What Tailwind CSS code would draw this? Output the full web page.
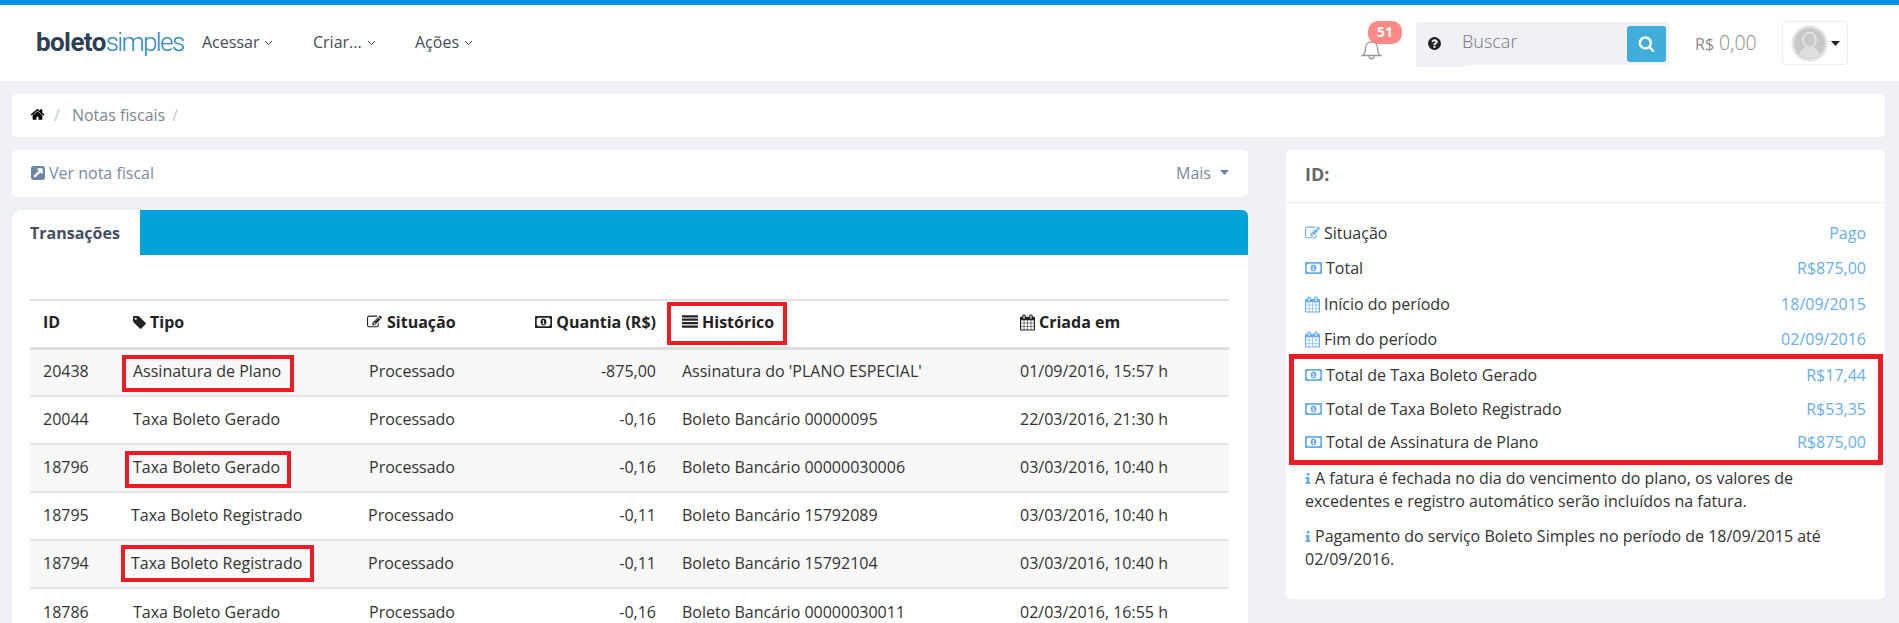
<!doctype html>
<html lang="pt-BR" class="h-[623px] overflow-hidden">
<head>
<meta charset="utf-8">
<script src="https://cdn.jsdelivr.net/npm/@tailwindcss/browser@4"></script>
<title>Notas fiscais</title>
</head>
<body class="relative h-[623px] w-[1899px] overflow-hidden bg-[#f0f1f6] font-['Open_Sans',sans-serif] text-[16px] text-[#333]">
<svg class="hidden">
  <symbol id="i-home" viewBox="0 0 1792 1792"><path d="M1472 992v480q0 26-19 45t-45 19h-384v-384h-256v384h-384q-26 0-45-19t-19-45v-480q0-1 .5-3t.5-3l575-474 575 474q1 2 1 6zm223-69l-62 74q-8 9-21 11h-3q-13 0-21-7l-692-577-692 577q-12 8-24 7-13-2-21-11l-62-74q-8-10-7-23.500t11-21.500l719-599q32-26 76-26t76 26l244 204v-195q0-14 9-23t23-9h192q14 0 23 9t9 23v408l219 182q10 8 11 21.500t-7 23.500z"/></symbol>
  <symbol id="i-link" viewBox="128 128 1536 1536"><path d="M1408 928v-480q0-26-19-45t-45-19h-480q-42 0-59 39-17 41 14 70l144 144-534 534q-19 19-19 45t19 45l102 102q19 19 45 19t45-19l534-534 144 144q18 19 45 19 12 0 25-5 39-17 39-59zm256-512v960q0 119-84.500 203.500t-203.500 84.500h-960q-119 0-203.500-84.500t-84.500-203.500v-960q0-119 84.500-203.500t203.500-84.500h960q119 0 203.500 84.500t84.500 203.500z"/></symbol>
  <symbol id="i-tag" viewBox="128 128 1536 1536"><path d="M576 448q0-53-37.500-90.500t-90.500-37.500-90.500 37.500-37.500 90.500 37.500 90.500 90.500 37.500 90.500-37.500 37.500-90.500zm1067 576q0 53-37 90l-491 492q-39 37-91 37-53 0-90-37l-715-716q-38-37-64.500-101t-26.500-117v-416q0-52 38-90t90-38h416q53 0 117 26.500t102 64.500l715 714q37 39 37 91z"/></symbol>
  <symbol id="i-edit" viewBox="0 128 1792 1536"><path d="M888 1184l116-116-152-152-116 116v56h96v96h56zm440-720q-16-16-33 1l-350 350q-17 17-1 33t33-1l350-350q17-17 1-33zm80 594v190q0 119-84.500 203.500t-203.500 84.500h-832q-119 0-203.500-84.500t-84.500-203.500v-832q0-119 84.500-203.500t203.500-84.500h832q63 0 117 25 15 7 18 23 3 17-9 29l-49 49q-14 14-32 8-23-6-45-6h-832q-66 0-113 47t-47 113v832q0 66 47 113t113 47h832q66 0 113-47t47-113v-126q0-13 9-22l64-64q15-15 35-7t20 29zm-96-738l288 288-672 672h-288v-288zm444 132l-92 92-288-288 92-92q28-28 68-28t68 28l152 152q28 28 28 68t-28 68z"/></symbol>
  <symbol id="i-money" viewBox="0 0 20 14"><path fill-rule="evenodd" d="M1 0h18a1 1 0 0 1 1 1v12a1 1 0 0 1-1 1H1a1 1 0 0 1-1-1V1a1 1 0 0 1 1-1zm2.500 2A2 2 0 0 1 2 3.500v7A2 2 0 0 1 3.500 12h13a2 2 0 0 1 1.500-1.500v-7A2 2 0 0 1 16.500 2zM10 3c2.200 0 3.500 1.800 3.500 4s-1.300 4-3.500 4-3.500-1.800-3.500-4 1.300-4 3.500-4zm-1.200 2v1h.7v2.600h-.7v1h2.400v-1h-.7V5z"/></symbol>
  <symbol id="i-cal" viewBox="0 0 1664 1792"><path d="M128 1664h288v-288h-288v288zm352 0h320v-288h-320v288zm-352-352h288v-320h-288v320zm352 0h320v-320h-320v320zm-352-384h288v-288h-288v288zm736 736h320v-288h-320v288zm-384-736h320v-288h-320v288zm768 736h288v-288h-288v288zm-384-352h320v-320h-320v320zm-352-864v-288q0-13-9.500-22.500t-22.500-9.500h-64q-13 0-22.500 9.500t-9.500 22.500v288q0 13 9.500 22.500t22.500 9.500h64q13 0 22.500-9.500t9.500-22.500zm736 864h288v-320h-288v320zm-384-384h320v-288h-320v288zm384 0h288v-288h-288v288zm32-480v-288q0-13-9.500-22.500t-22.500-9.500h-64q-13 0-22.500 9.500t-9.500 22.500v288q0 13 9.500 22.500t22.500 9.500h64q13 0 22.500-9.500t9.500-22.500zm384-64v1280q0 52-38 90t-90 38h-1408q-52 0-90-38t-38-90v-1280q0-52 38-90t90-38h128v-96q0-66 47-113t113-47h64q66 0 113 47t47 113v96h384v-96q0-66 47-113t113-47h64q66 0 113 47t47 113v96h128q52 0 90 38t38 90z"/></symbol>
  <symbol id="i-lines" viewBox="0 256 1792 1280"><path d="M1792 1344v128q0 26-19 45t-45 19h-1664q-26 0-45-19t-19-45v-128q0-26 19-45t45-19h1664q26 0 45 19t19 45zm0-384v128q0 26-19 45t-45 19h-1664q-26 0-45-19t-19-45v-128q0-26 19-45t45-19h1664q26 0 45 19t19 45zm0-384v128q0 26-19 45t-45 19h-1664q-26 0-45-19t-19-45v-128q0-26 19-45t45-19h1664q26 0 45 19t19 45zm0-384v128q0 26-19 45t-45 19h-1664q-26 0-45-19t-19-45v-128q0-26 19-45t45-19h1664q26 0 45 19t19 45z"/></symbol>
  <symbol id="i-info" viewBox="512 128 768 1408"><path d="M1216 1344v128q0 26-19 45t-45 19h-512q-26 0-45-19t-19-45v-128q0-26 19-45t45-19h64v-384h-64q-26 0-45-19t-19-45v-128q0-26 19-45t45-19h384q26 0 45 19t19 45v576h64q26 0 45 19t19 45zm-128-1152v192q0 26-19 45t-45 19h-256q-26 0-45-19t-19-45v-192q0-26 19-45t45-19h256q26 0 45 19t19 45z"/></symbol>
</svg>

<header class="h-[81px] border-t-[5px] border-[#008fe3] bg-white flex items-center">
  <div class="ml-[36px] w-[166px] pb-[3px] font-['Roboto',sans-serif] text-[26px] leading-none tracking-[-0.6px]"><span class="font-bold text-[#2f3f52]">boleto</span><span class="font-light text-[#2f86c5] tracking-[-1.6px]">simples</span></div>
  <nav class="flex text-[16px] text-[#444c57]">
    <a class="w-[111px] flex items-center gap-[5px] -mt-[2px]">Acessar <svg class="w-[9px] h-[6px] mt-[2px]" viewBox="0 0 9 6" fill="none" stroke="currentColor"><path d="M1 1l3.500 3.500L8 1"/></svg></a>
    <a class="w-[102px] flex items-center gap-[5px] -mt-[2px]">Criar... <svg class="w-[9px] h-[6px] mt-[2px]" viewBox="0 0 9 6" fill="none" stroke="currentColor"><path d="M1 1l3.500 3.500L8 1"/></svg></a>
    <a class="flex items-center gap-[5px] -mt-[2px]">Ações <svg class="w-[9px] h-[6px] mt-[2px]" viewBox="0 0 9 6" fill="none" stroke="currentColor"><path d="M1 1l3.500 3.500L8 1"/></svg></a>
  </nav>
  <div class="ml-auto mr-[51px] flex items-center">
    <div class="relative w-[48px] h-[44px]">
      <svg class="absolute -left-[7px] top-[18px] w-[21px] h-[22px] text-[#999]" viewBox="0 0 21 22" fill="none" stroke="currentColor" stroke-width="1.300"><path d="M1.500 16.500c2-1.500 3-3.500 3-7.500 0-3.500 2.500-6 6-6s6 2.500 6 6c0 4 1 6 3 7.500zM8 17.500c0 3 5 3 5 0"/></svg>
      <span class="absolute left-[0px] top-0 w-[34px] h-[23px] rounded-[10px] bg-[#ff8a84] text-white text-[14px] font-bold leading-[22px] text-center">51</span>
    </div>
    <div class="relative w-[253px] h-[43px] rounded-[3px] bg-[#f0f1f6] flex items-center">
      <svg class="ml-[11px] w-[15px] h-[15px] fill-[#222]" viewBox="0 0 1792 1792"><path d="M1024 1376v-192q0-14-9-23t-23-9h-192q-14 0-23 9t-9 23v192q0 14 9 23t23 9h192q14 0 23-9t9-23zm256-672q0-88-55.500-163t-138.500-116-170-41q-243 0-371 213-15 24 8 42l132 100q7 6 19 6 16 0 25-12 53-68 86-92 34-24 86-24 48 0 85.500 26t37.500 59q0 38-20 61t-68 45q-63 28-115.500 86.500t-52.500 125.500v36q0 14 9 23t23 9h192q14 0 23-9t9-23q0-19 21.500-49.500t54.500-49.500q32-18 49-28.500t46-35 44.500-48 28-60.500 12.500-81zm384 192q0 209-103 385.500t-279.500 279.500-385.500 103-385.500-103-279.500-279.500-103-385.500 103-385.500 279.500-279.500 385.500-103 385.500 103 279.500 279.500 103 385.500z"/></svg>
      <span class="ml-[20px] font-light text-[18px] text-[#777] -mt-[3px]">Buscar</span>
      <span class="absolute right-[3px] top-[4px] w-[39px] h-[36px] rounded-[3px] bg-[#41aed9] flex items-center justify-center"><svg class="w-[17px] h-[17px] fill-white" viewBox="0 0 1792 1792"><path d="M1216 832q0-185-131.500-316.500t-316.500-131.500-316.500 131.500-131.500 316.500 131.500 316.500 316.500 131.500 316.500-131.500 131.500-316.500zm512 832q0 52-38 90t-90 38q-54 0-90-38l-343-342q-179 124-399 124-143 0-273.500-55.500t-225-150-150-225-55.500-273.500 55.500-273.500 150-225 225-150 273.500-55.500 273.500 55.500 225 150 150 225 55.500 273.500q0 220-124 399l343 343q37 37 37 90z"/></svg></span>
      <span class="absolute left-0 top-[43px] w-[50px] h-[2px] bg-[#f0f1f6] rounded-b-[2px]"></span>
    </div>
    <div class="ml-[26px] w-[87px] text-[#8b8b8b] font-light text-[19.500px] whitespace-nowrap"><span class="text-[16px] font-normal">R$</span> 0,00</div>
    <div class="w-[66px] h-[44px] rounded-[4px] border border-[#eceef5] bg-white flex items-center pl-[8px]">
      <svg class="w-[37px] h-[37px]" viewBox="0 0 37 37"><ellipse cx="18.500" cy="18.500" rx="18" ry="18" fill="#e4e4e4"/><ellipse cx="18.500" cy="18.500" rx="15.500" ry="15.500" fill="#c8c8c8"/><ellipse cx="18.500" cy="15" rx="6.500" ry="7.500" fill="none" stroke="#e6e6e6" stroke-width="1.500"/><path d="M8 31c1-6 5-8 7-9h7c2 1 6 3 7 9-5 3-16 3-21 0z" fill="#dedede"/></svg>
      <svg class="ml-[3px] w-[9px] h-[5px] fill-[#222]" viewBox="0 0 9 5"><path d="M0 0h9L4.500 5z"/></svg>
    </div>
  </div>
</header>

<main class="h-[542px] overflow-hidden pl-[12px] pr-[14px] pt-[13px]">
  <div class="h-[43px] rounded-[5px] bg-white flex items-center pl-[18px] pb-[2px] text-[#7b8794] gap-[9px]">
    <svg class="w-[15px] h-[15px] fill-black"><use href="#i-home"/></svg>
    <span class="text-[#c4c8ce]">/</span><span class="ml-[3px]">Notas fiscais</span><span class="text-[#c4c8ce] -ml-[2px]">/</span>
  </div>

  <div class="mt-[13px] grid grid-cols-[1236px_599px] gap-x-[38px] items-start">
    <div class="flex flex-col">
      <div class="h-[47px] rounded-[5px] bg-white flex items-center justify-between pl-[19px] pr-[19px] pb-[2px] text-[#7b8aa0]">
        <span class="flex items-center gap-[4px]"><svg class="w-[14px] h-[14px] fill-[#6d84a3]"><use href="#i-link"/></svg>Ver nota fiscal</span>
        <span class="flex items-center gap-[9px]">Mais <svg class="w-[9px] h-[5px] fill-[#6d84a3]" viewBox="0 0 9 5"><path d="M0 0h9L4.500 5z"/></svg></span>
      </div>
      <div class="mt-[13px] h-[45px] flex bg-[#00a2d9] rounded-t-[6px] overflow-hidden">
        <div class="w-[128px] bg-white pl-[18px] flex items-center font-bold text-[16px] text-[#44505f]">Transações</div>
      </div>
      <div class="bg-white pt-[44px] px-[18px] h-[368px] overflow-hidden">
        <table class="w-[1199px] table-fixed border-collapse">
          <colgroup><col class="w-[90px]"><col class="w-[234px]"><col class="w-[150px]"><col class="w-[165px]"><col class="w-[338px]"><col class="w-[222px]"></colgroup>
          <thead class="[&_th]:pb-[3px]">
            <tr class="h-[48px] border-t-2 border-b-[3px] border-t-[#e4e4e4] border-b-[#dedede] text-left font-bold text-[16px] text-[#222]">
              <th class="pl-[13px]">ID</th>
              <th class="pl-[13px]"><span class="flex items-center gap-[4px]"><svg class="w-[13px] h-[15px] fill-[#222]"><use href="#i-tag"/></svg>Tipo</span></th>
              <th class="pl-[13px]"><span class="flex items-center gap-[5px]"><svg class="w-[15px] h-[14px] fill-[#222]"><use href="#i-edit"/></svg>Situação</span></th>
              <th class="pr-[13px]"><span class="flex items-center justify-end gap-[4px]"><svg class="w-[17px] h-[12px] fill-[#222]"><use href="#i-money"/></svg>Quantia (R$)</span></th>
              <th class="pl-[13px]"><span class="flex items-center gap-[4px]"><svg class="w-[16px] h-[14px] fill-[#222]"><use href="#i-lines"/></svg>Histórico</span></th>
              <th class="pl-[13px]"><span class="flex items-center gap-[4px]"><svg class="w-[15px] h-[17px] fill-[#222]"><use href="#i-cal"/></svg>Criada em</span></th>
            </tr>
          </thead>
          <tbody class="text-[#333] [&_td]:pb-[2px]">
            <tr class="h-[48px] border-b-2 border-[#e6e6e6] bg-[#f8f8f9]"><td class="pl-[13px]">20438</td><td class="pl-[13px]">Assinatura de Plano</td><td class="pl-[15px]">Processado</td><td class="pr-[13px] text-right">-875,00</td><td class="pl-[13px]">Assinatura do 'PLANO ESPECIAL'</td><td class="pl-[13px]">01/09/2016, 15:57 h</td></tr>
            <tr class="h-[48px] border-b-2 border-[#e6e6e6]"><td class="pl-[13px]">20044</td><td class="pl-[13px]">Taxa Boleto Gerado</td><td class="pl-[15px]">Processado</td><td class="pr-[13px] text-right">-0,16</td><td class="pl-[13px]">Boleto Bancário 00000095</td><td class="pl-[13px]">22/03/2016, 21:30 h</td></tr>
            <tr class="h-[48px] border-b-2 border-[#e6e6e6] bg-[#f8f8f9]"><td class="pl-[13px]">18796</td><td class="pl-[13px]">Taxa Boleto Gerado</td><td class="pl-[15px]">Processado</td><td class="pr-[13px] text-right">-0,16</td><td class="pl-[13px]">Boleto Bancário 00000030006</td><td class="pl-[13px]">03/03/2016, 10:40 h</td></tr>
            <tr class="h-[48px] border-b-2 border-[#e6e6e6]"><td class="pl-[13px]">18795</td><td class="pl-[11px]">Taxa Boleto Registrado</td><td class="pl-[14px]">Processado</td><td class="pr-[13px] text-right">-0,11</td><td class="pl-[13px]">Boleto Bancário 15792089</td><td class="pl-[13px]">03/03/2016, 10:40 h</td></tr>
            <tr class="h-[48px] border-b-2 border-[#e6e6e6] bg-[#f8f8f9]"><td class="pl-[13px]">18794</td><td class="pl-[11px]">Taxa Boleto Registrado</td><td class="pl-[14px]">Processado</td><td class="pr-[13px] text-right">-0,11</td><td class="pl-[13px]">Boleto Bancário 15792104</td><td class="pl-[13px]">03/03/2016, 10:40 h</td></tr>
            <tr class="h-[48px]"><td class="pl-[13px]">18786</td><td class="pl-[13px]">Taxa Boleto Gerado</td><td class="pl-[15px]">Processado</td><td class="pr-[13px] text-right">-0,16</td><td class="pl-[13px]">Boleto Bancário 00000030011</td><td class="pl-[13px]">02/03/2016, 16:55 h</td></tr>
          </tbody>
        </table>
      </div>
    </div>

    <aside class="h-[449px] rounded-[5px] bg-white">
      <div class="h-[53px] border-b border-[#eceef2] pl-[19px] pb-[3px] flex items-center font-bold text-[18px] text-[#666]">ID:</div>
      <dl class="px-[19px] pt-[13px] text-[#333]">
        <div class="h-[34px] flex items-center justify-between"><dt class="flex items-center gap-[4px]"><svg class="w-[15px] h-[14px] fill-[#6aaee8]"><use href="#i-edit"/></svg>Situação</dt><dd class="text-[#6aaee8]">Pago</dd></div>
        <div class="h-[36px] flex items-center justify-between"><dt class="flex items-center gap-[4px]"><svg class="w-[17px] h-[12px] fill-[#6aaee8]"><use href="#i-money"/></svg>Total</dt><dd class="text-[#6aaee8]">R$875,00</dd></div>
        <div class="h-[36px] flex items-center justify-between"><dt class="flex items-center gap-[4px]"><svg class="w-[15px] h-[17px] fill-[#6aaee8]"><use href="#i-cal"/></svg>Início do período</dt><dd class="text-[#6aaee8]">18/09/2015</dd></div>
        <div class="h-[34px] flex items-center justify-between"><dt class="flex items-center gap-[4px]"><svg class="w-[15px] h-[17px] fill-[#6aaee8]"><use href="#i-cal"/></svg>Fim do período</dt><dd class="text-[#6aaee8]">02/09/2016</dd></div>
        <div class="h-[38px] flex items-center justify-between"><dt class="flex items-center gap-[4px]"><svg class="w-[17px] h-[12px] fill-[#6aaee8]"><use href="#i-money"/></svg>Total de Taxa Boleto Gerado</dt><dd class="text-[#6aaee8]">R$17,44</dd></div>
        <div class="h-[30px] flex items-center justify-between"><dt class="flex items-center gap-[4px]"><svg class="w-[17px] h-[12px] fill-[#6aaee8]"><use href="#i-money"/></svg>Total de Taxa Boleto Registrado</dt><dd class="text-[#6aaee8]">R$53,35</dd></div>
        <div class="h-[36px] flex items-center justify-between"><dt class="flex items-center gap-[4px]"><svg class="w-[17px] h-[12px] fill-[#6aaee8]"><use href="#i-money"/></svg>Total de Assinatura de Plano</dt><dd class="text-[#6aaee8]">R$875,00</dd></div>
      </dl>
      <div class="px-[19px] pt-[7px] leading-[23px] text-[#333]">
        <p><svg class="inline w-[6px] h-[13px] fill-[#6aaee8] mr-[4px] align-[-1px]"><use href="#i-info"/></svg>A fatura é fechada no dia do vencimento do plano, os valores de excedentes e registro automático serão incluídos na fatura.</p>
        <p class="mt-[12px]"><svg class="inline w-[6px] h-[13px] fill-[#6aaee8] mr-[4px] align-[-1px]"><use href="#i-info"/></svg>Pagamento do serviço Boleto Simples no período de 18/09/2015 até 02/09/2016.</p>
      </div>
    </aside>
  </div>
</main>

<div class="absolute left-[122px] top-[355px] w-[172px] h-[37px] border-4 border-[#ed1c24]"></div>
<div class="absolute left-[125px] top-[451px] w-[166px] h-[37px] border-4 border-[#ed1c24]"></div>
<div class="absolute left-[121px] top-[545px] w-[193px] h-[37px] border-4 border-[#ed1c24]"></div>
<div class="absolute left-[667px] top-[302px] w-[120px] h-[43px] border-4 border-[#ed1c24]"></div>
<div class="absolute left-[1289px] top-[354px] w-[594px] h-[111px] border-[5px] border-[#ed1c24]"></div>
</body>
</html>
